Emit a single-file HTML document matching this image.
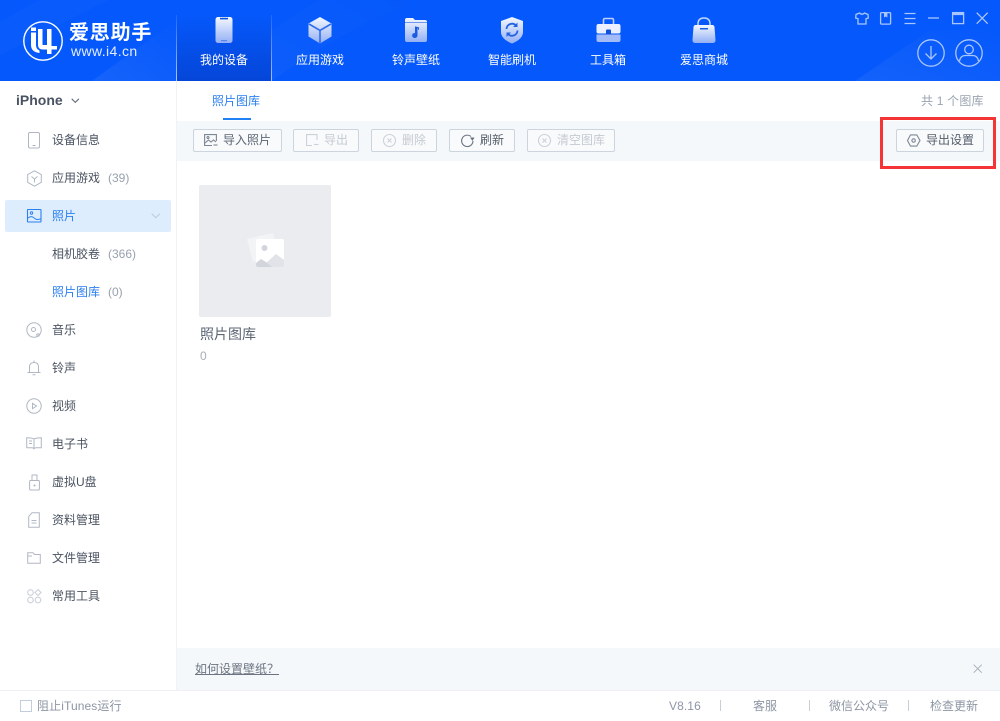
<!DOCTYPE html>
<html lang="zh-CN"><head><meta charset="utf-8"><title>爱思助手</title>
<style>
*{box-sizing:border-box;margin:0;padding:0}
html,body{width:1000px;height:721px;overflow:hidden;background:#fff}
body{position:relative;font-family:"Liberation Sans","Noto Sans CJK SC",sans-serif;font-size:12px;color:#5c6675}
.a{position:absolute;white-space:nowrap}
svg{position:absolute;overflow:visible}
#hd{left:0;top:0;width:1000px;height:81px;background:#0558fb;overflow:hidden}
.nt{position:absolute;top:51px;width:96px;text-align:center;color:#fff;line-height:18px}
.r{position:absolute;left:52px;line-height:18px;color:#4a5361}
.r i{font-style:normal;color:#98a1ae;margin-left:8px}
.s{fill:none;stroke:#b0b7c3;stroke-width:1}
.b{position:absolute;top:129px;height:23px;border:1px solid #ccd4de;border-radius:2px;background:#f9fafc;line-height:21px;color:#5c6675}
.b span{position:absolute;top:0}
.d{color:#c5cad2}
.ts{fill:none;stroke:#7e8794;stroke-width:1.1}
.tl{fill:none;stroke:#ccd1d9;stroke-width:1.1}
.w{fill:none;stroke:#a9c6ff;stroke-width:1.3}
</style></head><body>

<div class="a" id="hd">
 <svg style="left:0;top:0" width="1000" height="81"><defs>
 <linearGradient id="g" x1="0" y1="0" x2="0" y2="1"><stop offset="0" stop-color="#f4f7ff"/><stop offset="1" stop-color="#93b0f5"/></linearGradient>
 <linearGradient id="h1" x1="0" y1="1" x2="1" y2="0"><stop offset="0" stop-color="#fff" stop-opacity=".07"/><stop offset="1" stop-color="#fff" stop-opacity="0"/></linearGradient>
 <linearGradient id="h2" x1="0" y1="1" x2="1" y2="0"><stop offset="0" stop-color="#fff" stop-opacity=".06"/><stop offset="1" stop-color="#fff" stop-opacity="0"/></linearGradient>
 </defs>
 <path d="M0 55L108 0H40L0 22Z" fill="#fff" opacity=".025"/><path d="M92 81L177 20V81Z" fill="url(#h1)"/><path d="M272 30L320 0H420Q340 30 272 81Z" fill="url(#h2)" opacity=".5"/><path d="M855 81L930 30 1000 30V81Z" fill="url(#h2)"/></svg>
 <div style="position:absolute;left:177px;top:15px;width:95px;height:66px;background:linear-gradient(#0558fb,#0546d8)"></div>
 <div style="position:absolute;left:176px;top:15px;width:1px;height:66px;background:linear-gradient(rgba(255,255,255,.1),rgba(255,255,255,.65))"></div>
 <div style="position:absolute;left:271px;top:15px;width:1px;height:66px;background:linear-gradient(rgba(255,255,255,.1),rgba(255,255,255,.65))"></div>

 <svg style="left:23px;top:21px" width="40" height="40"><circle cx="20" cy="20" r="19.200" fill="none" stroke="#fff" stroke-width="1.400"/><path d="M8 6.500h5V10H8ZM8 11.500h5V24Q13 28 16.500 29.500V32Q8 31 8 24ZM15 8h4.500V24H24V8h4.500V25H34V28.500H28.500V33H24V28.500H20Q15 28.500 15 24Z" fill="#fff"/></svg>
 <div class="a" style="left:69px;top:20px;font-size:20px;line-height:26px;color:#fff;font-weight:700;letter-spacing:.8px">爱思助手</div>
 <div class="a" style="left:71px;top:43px;font-size:14px;line-height:16px;color:#e4edff;letter-spacing:.4px">www.i4.cn</div>

 <svg style="left:215px;top:17px" width="18" height="27"><rect x=".5" width="17" height="26" rx="2.500" fill="url(#g)"/><rect x="5" y=".8" width="8" height="1.600" fill="#0b50dd"/><rect x="6" y="23" width="6" height="1.300" fill="#5a86e6"/></svg>
 <div class="nt" style="left:176px">我的设备</div>

 <svg style="left:308px;top:17px" width="24" height="27"><path d="M12 0L23.500 6.500V19.500L12 26.500L.5 19.500V6.500Z" fill="url(#g)"/><path d="M1 7L12 13.500L23 7M12 13.500V26" fill="none" stroke="#2f6cf0" stroke-width="1.600"/></svg>
 <div class="nt" style="left:272px">应用游戏</div>

 <svg style="left:405px;top:17px" width="22" height="27"><path d="M0 3q0-2 2-2h6l2 2h10q2 0 2 2v18q0 2-2 2H2q-2 0-2-2Z" fill="url(#g)"/><path d="M0 5.500h22" stroke="#6f97ee" stroke-width="1"/><path d="M12 10v8.500a2.200 2 0 1 1-1.500-1.900V10l3 .8v2" fill="#1c5ce0" stroke="#1c5ce0" stroke-width="1"/></svg>
 <div class="nt" style="left:368px">铃声壁纸</div>

 <svg style="left:501px;top:17px" width="22" height="27"><path d="M11 0L22 4V15Q22 22 11 26.500Q0 22 0 15V4Z" fill="url(#g)"/><path d="M5.500 12a5.500 5.500 0 0 1 9.500-3.500M16.500 13.500a5.500 5.500 0 0 1-9.500 3.500" fill="none" stroke="#2463e4" stroke-width="1.800"/><path d="M16.500 5.500v4.500h-4.500M5.500 20v-4.500h4.500" fill="#2463e4"/></svg>
 <div class="nt" style="left:464px">智能刷机</div>

 <svg style="left:596px;top:18px" width="25" height="25"><path d="M7.500 6V2q0-1.500 1.500-1.500h7q1.500 0 1.500 1.500v4" fill="none" stroke="#bcd0fb" stroke-width="1.600"/><rect x=".5" y="6" width="24" height="9.500" rx="2" fill="#eaf0ff"/><path d="M.5 16.500h24V22q0 2-2 2H2.500q-2 0-2-2Z" fill="#a3bcf7"/><rect x="10" y="11.500" width="5" height="5" rx="1" fill="#0f50dc"/></svg>
 <div class="nt" style="left:560px">工具箱</div>

 <svg style="left:692px;top:17px" width="24" height="27"><path d="M6 10V7q0-6 6-6t6 6v3" fill="none" stroke="#c6d7fc" stroke-width="1.500"/><path d="M3.500 8h17q1.500 0 2 2l1 13q0 3-3 3h-17q-3 0-3-3l1-13q.5-2 2-2Z" fill="url(#g)"/><rect x="8" y="11" width="8" height="1.500" fill="#1c5ce0"/></svg>
 <div class="nt" style="left:656px">爱思商城</div>

 <svg style="left:855px;top:12px" width="14" height="13"><path d="M4.500 1L1 2.500 .7 6l2.300.7V12h8V6.700L13.300 6 13 2.500 9.500 1Q7 3.500 4.500 1Z" class="w"/></svg>
 <svg style="left:880px;top:12px" width="12" height="13"><rect x=".6" y=".6" width="10" height="11.500" rx="1" class="w"/><path d="M4 1v4.500l1.700-1 1.700 1V1z" fill="#a9c6ff"/></svg>
 <svg style="left:904px;top:12px" width="13" height="13"><path d="M.5 1.500h11M.5 6.500h11M.5 11.500h11" class="w"/></svg>
 <svg style="left:928px;top:17px" width="13" height="3"><path d="M0 1h11" class="w"/></svg>
 <svg style="left:952px;top:12px" width="13" height="13"><rect x=".6" y=".6" width="11" height="11" class="w"/><rect x=".6" y=".6" width="11" height="2.500" fill="#a9c6ff"/></svg>
 <svg style="left:976px;top:12px" width="13" height="13"><path d="M.7.7l11 11M11.700.7l-11 11" class="w"/></svg>
 <svg style="left:917px;top:39px" width="28" height="28"><circle cx="14" cy="14" r="13.200" class="w"/><path d="M14 7v13M8.500 14.500L14 20l5.500-5.500" class="w"/></svg>
 <svg style="left:955px;top:39px" width="28" height="28"><circle cx="14" cy="14" r="13.200" class="w"/><circle cx="14" cy="10.500" r="4.300" class="w"/><path d="M4.500 22q1-5.500 6-5.500h7q5 0 6 5.500" class="w"/></svg>
</div>

<!-- sidebar -->
<div class="a" style="left:176px;top:81px;width:1px;height:609px;background:#f0f2f6"></div>
<div class="a" style="left:16px;top:91px;font-size:14px;line-height:18px;font-weight:700;color:#4a5361">iPhone</div>
<svg style="left:71px;top:98px" width="9" height="6"><path d="M.7.8L4.300 4.400 7.900.8" fill="none" stroke="#606a78" stroke-width="1.100"/></svg>

<div class="a" style="left:5px;top:200px;width:166px;height:32px;background:#deedfd;border-radius:2px"></div>
<svg style="left:151px;top:213px" width="10" height="6"><path d="M.7.7L4.800 4.700 8.900.7" fill="none" stroke="#b9c8d9" stroke-width="1"/></svg>

<div class="r" style="top:131px">设备信息</div>
<div class="r" style="top:169px">应用游戏<i>(39)</i></div>
<div class="r" style="top:207px;color:#2b80f0">照片</div>
<div class="r" style="top:245px">相机胶卷<i>(366)</i></div>
<div class="r" style="top:283px;color:#2b80f0">照片图库<i>(0)</i></div>
<div class="r" style="top:321px">音乐</div>
<div class="r" style="top:359px">铃声</div>
<div class="r" style="top:397px">视频</div>
<div class="r" style="top:435px">电子书</div>
<div class="r" style="top:473px">虚拟U盘</div>
<div class="r" style="top:511px">资料管理</div>
<div class="r" style="top:549px">文件管理</div>
<div class="r" style="top:587px">常用工具</div>

<svg style="left:28px;top:132px" width="12" height="17"><rect x=".5" y=".5" width="11" height="15.500" rx="1.500" class="s"/><path d="M4.500 13.500h3" class="s"/></svg>
<svg style="left:27px;top:170px" width="15" height="17"><path d="M7.500 .8L14.300 4.500V12.300L7.500 16.200 .7 12.300V4.500Z" class="s"/><path d="M4.500 6.500L7.500 9 10.500 6.500M7.500 9V12.500" class="s"/></svg>
<svg style="left:27px;top:209px" width="15" height="14"><rect x=".5" y=".5" width="13.500" height="12.500" rx=".5" fill="none" stroke="#2b80f0" stroke-width="1.100"/><circle cx="4.500" cy="4" r="1.200" fill="none" stroke="#2b80f0"/><path d="M1 9q3-2.500 5.500-.5T10 10.500l4-.5" fill="none" stroke="#2b80f0" stroke-width="1"/></svg>
<svg style="left:26px;top:322px" width="16" height="16"><circle cx="8" cy="8" r="7.200" class="s"/><circle cx="7.500" cy="7.500" r="2" class="s"/><circle cx="12" cy="13" r="1.300" class="s"/></svg>
<svg style="left:27px;top:360px" width="14" height="16"><path d="M.5 12.500h13M2.500 12.500V7q0-4.500 4.500-4.500T11.500 7v5.500M7 .5v2M5.500 14.800h3" class="s"/></svg>
<svg style="left:26px;top:398px" width="16" height="16"><circle cx="8" cy="8" r="7.200" class="s"/><path d="M6.500 5.300L10.500 8 6.500 10.700Z" class="s"/></svg>
<svg style="left:26px;top:437px" width="16" height="13"><path d="M8 1.800Q5 .7 .7.700V10.800H6Q8 11 8 12.300 8 11 10 10.800H15.300V.7Q11 .7 8 1.800ZM8 1.800V12M3 4h3M3 6.500h3" class="s"/></svg>
<svg style="left:29px;top:474px" width="11" height="17"><path d="M3 7V1h5v6" class="s"/><rect x=".6" y="6.500" width="9.800" height="9.500" rx="1" class="s"/><circle cx="5.500" cy="11.500" r="1" fill="#aab2bf"/></svg>
<svg style="left:28px;top:512px" width="12" height="16"><path d="M4 .7H11.300V15.300H.7V4.500Z" class="s"/><path d="M3.500 8.500h5M3.500 11h5" class="s"/></svg>
<svg style="left:27px;top:552px" width="14" height="12"><path d="M.7.7H6L7.500 2.500H13.300V11.300H.7ZM.7 4H5" class="s"/></svg>
<svg style="left:27px;top:589px" width="15" height="15"><circle cx="3.500" cy="3.500" r="2.800" class="tl"/><path d="M11 .5L14 3.500 11 6.500 8 3.500Z" class="tl"/><circle cx="3.500" cy="11" r="2.800" class="tl"/><circle cx="11" cy="11" r="2.800" class="tl"/></svg>

<!-- tab -->
<div class="a" style="left:212px;top:92px;line-height:18px;color:#2b80f0">照片图库</div>
<div class="a" style="left:223px;top:118px;width:28px;height:2px;background:#2280f5"></div>
<div class="a" style="left:921px;top:92px;line-height:18px;color:#9aa3b0;letter-spacing:.2px">共 1 个图库</div>

<!-- toolbar -->
<div class="a" style="left:177px;top:121px;width:823px;height:40px;background:#f5f8fb"></div>

<div class="b" style="left:193px;width:89px"><span style="left:29px">导入照片</span>
 <svg style="left:10px;top:4px" width="14" height="13"><path d="M8 11.500H.6V.6H12.400V7" class="ts"/><path d="M1 9l3.500-3 2.500 2 2.500-2 2.500 2" class="ts"/><circle cx="4" cy="3.500" r="1" class="ts"/><path d="M9.500 11h4" class="ts"/></svg></div>
<div class="b d" style="left:293px;width:66px"><span style="left:30px">导出</span>
 <svg style="left:12px;top:4px" width="13" height="13"><path d="M6 11.500H.6V.6H11V6" class="tl"/><path d="M8 10.500h4.500" class="tl"/></svg></div>
<div class="b d" style="left:371px;width:66px"><span style="left:30px">删除</span>
 <svg style="left:11px;top:4px" width="14" height="14"><circle cx="6.500" cy="6.500" r="6" class="tl"/><path d="M4.500 4.500l4 4M8.500 4.500l-4 4" class="tl"/></svg></div>
<div class="b" style="left:449px;width:66px"><span style="left:30px;color:#555e6b">刷新</span>
 <svg style="left:11px;top:4px" width="14" height="14"><path d="M12 7a5.700 5.700 0 1 1-2-4.500" fill="none" stroke="#6a7380" stroke-width="1.100"/><path d="M9 3.500h4.500L11.500 7Z" fill="#6a7380"/></svg></div>
<div class="b d" style="left:527px;width:88px"><span style="left:29px">清空图库</span>
 <svg style="left:10px;top:4px" width="14" height="14"><circle cx="6.500" cy="6.500" r="6" class="tl"/><path d="M4.500 4.500l4 4M8.500 4.500l-4 4" class="tl"/></svg></div>
<div class="b" style="left:896px;width:88px"><span style="left:29px;color:#555e6b">导出设置</span>
 <svg style="left:10px;top:4px" width="14" height="14"><path d="M3.500.9h6.300L13 6.500 9.800 12.100H3.500L.5 6.500Z" class="ts"/><circle cx="6.600" cy="6.500" r="1.700" class="ts"/></svg></div>
<div class="a" style="left:880px;top:117px;width:116px;height:52px;border:3px solid #f53535"></div>

<!-- album -->
<div class="a" style="left:199px;top:185px;width:132px;height:132px;background:#ebecf0;border-radius:2px"></div>
<svg style="left:247px;top:232px" width="38" height="36"><path d="M0 7L26 1 31 24 6 30Z" fill="#f3f4f6"/><rect x="9" y="7" width="28" height="28" rx="2" fill="#fff"/><circle cx="17.500" cy="16" r="3" fill="#d2d5db"/><path d="M15 35H35Q37 35 37 33V28L29 22 19 31Z" fill="#e1e3e8"/><path d="M9 33V31L14 27 19 30 25 35H11Q9 35 9 33Z" fill="#d2d5db"/></svg>
<div class="a" style="left:200px;top:325px;font-size:14px;line-height:18px;color:#5c6675">照片图库</div>
<div class="a" style="left:200px;top:347px;font-size:12px;line-height:18px;color:#a7adb7">0</div>

<!-- bottom -->
<div class="a" style="left:177px;top:648px;width:823px;height:42px;background:#f5f8fb"></div>
<div class="a" style="left:195px;top:660px;line-height:18px;color:#6b7480;text-decoration:underline">如何设置壁纸？</div>
<svg style="left:973px;top:664px" width="10" height="10"><path d="M.7.7l8 8M8.700.7l-8 8" fill="none" stroke="#aab0ba" stroke-width="1"/></svg>
<div class="a" style="left:0;top:690px;width:1000px;height:1px;background:#eef0f5"></div>

<div class="a" style="left:20px;top:700px;width:12px;height:12px;border:1px solid #c3cedd"></div>
<div class="a" style="left:37px;top:697px;line-height:18px;color:#8d96a4;letter-spacing:.1px">阻止iTunes运行</div>
<div class="a" style="left:669px;top:697px;line-height:18px;color:#8d96a4;letter-spacing:.1px">V8.16</div>
<div class="a" style="left:720px;top:700px;width:1px;height:11px;background:#c9ced6"></div>
<div class="a" style="left:753px;top:697px;line-height:18px;color:#8d96a4">客服</div>
<div class="a" style="left:809px;top:700px;width:1px;height:11px;background:#c9ced6"></div>
<div class="a" style="left:829px;top:697px;line-height:18px;color:#8d96a4">微信公众号</div>
<div class="a" style="left:908px;top:700px;width:1px;height:11px;background:#c9ced6"></div>
<div class="a" style="left:930px;top:697px;line-height:18px;color:#8d96a4">检查更新</div>
</body></html>
